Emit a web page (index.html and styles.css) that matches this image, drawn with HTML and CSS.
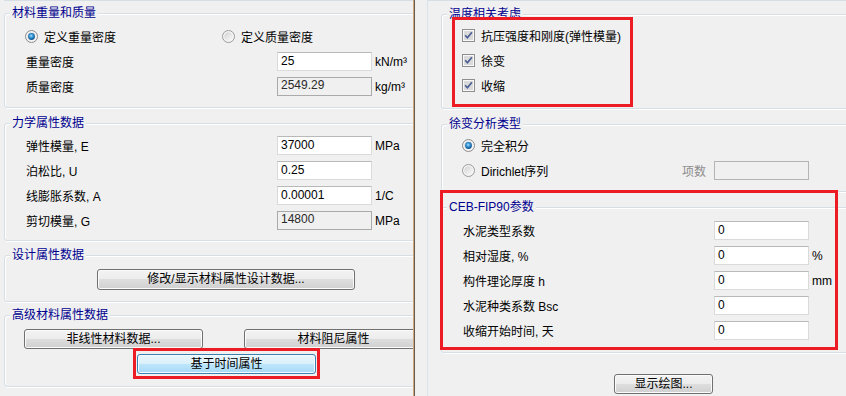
FILE: index.html
```html
<!DOCTYPE html>
<html lang="zh-CN">
<head>
<meta charset="utf-8">
<title>材料属性</title>
<link rel="stylesheet" href="styles.css">
</head>
<body>
<svg class="defs" width="0" height="0" aria-hidden="true">
  <defs>
    <linearGradient id="rbg" x1="0" y1="0" x2="1" y2="1">
      <stop offset="0" stop-color="#d2d2d2"/>
      <stop offset="1" stop-color="#fbfbfb"/>
    </linearGradient>
    <radialGradient id="rdot" cx="0.45" cy="0.4" r="0.6">
      <stop offset="0" stop-color="#a9dcf8"/>
      <stop offset="0.5" stop-color="#2f8fd0"/>
      <stop offset="1" stop-color="#0d4d8a"/>
    </radialGradient>
  </defs>
</svg>
<div class="app">
  <div class="left">
    <div class="stub"></div>

    <div class="group g1">
      <div class="gtitle">材料重量和质量</div>
      <div class="row">
        <span class="opt w197"><svg class="ico" width="13" height="13" viewBox="0 0 13 13"><circle cx="6.5" cy="6.5" r="6" fill="#f4f4f4" stroke="#8a8a8a"/><circle cx="6.5" cy="6.5" r="4.3" fill="url(#rbg)"/><circle cx="6.5" cy="6.5" r="3.4" fill="url(#rdot)"/></svg>定义重量密度</span>
        <span class="opt"><svg class="ico" width="13" height="13" viewBox="0 0 13 13"><circle cx="6.5" cy="6.5" r="6" fill="#f4f4f4" stroke="#9a9a9a"/><circle cx="6.5" cy="6.5" r="4.3" fill="url(#rbg)"/></svg>定义质量密度</span>
      </div>
      <div class="row field"><span>重量密度</span><span class="input">25</span><span class="unit">kN/m³</span></div>
      <div class="row field"><span>质量密度</span><span class="input dis">2549.29</span><span class="unit">kg/m³</span></div>
    </div>

    <div class="group g2">
      <div class="gtitle">力学属性数据</div>
      <div class="row field"><span>弹性模量, E</span><span class="input">37000</span><span class="unit">MPa</span></div>
      <div class="row field"><span>泊松比, U</span><span class="input">0.25</span><span class="unit"></span></div>
      <div class="row field"><span>线膨胀系数, A</span><span class="input">0.00001</span><span class="unit">1/C</span></div>
      <div class="row field"><span>剪切模量, G</span><span class="input dis">14800</span><span class="unit">MPa</span></div>
    </div>

    <div class="group g3">
      <div class="gtitle">设计属性数据</div>
      <button class="btn btn-design">修改/显示材料属性设计数据...</button>
    </div>

    <div class="group g4">
      <div class="gtitle">高级材料属性数据</div>
      <div class="btnrow">
        <button class="btn btn-nl">非线性材料数据...</button>
        <button class="btn btn-damp">材料阻尼属性</button>
      </div>
      <div class="btnrow second">
        <button class="btn btn-time active">基于时间属性</button>
      </div>
    </div>
  </div>

  <div class="seam"></div>

  <div class="right">
    <div class="frame">
      <div class="stub"></div>

      <div class="group r1">
        <div class="gtitle">温度相关考虑</div>
        <div class="row chk"><svg class="ico" width="13" height="13" viewBox="0 0 13 13"><rect x="0.5" y="0.5" width="12" height="12" fill="#f7f7f7" stroke="#8e8f8f"/><rect x="2" y="2" width="9" height="9" fill="#dadada"/><path d="M3.2 6.3 L5.4 8.8 L9.9 3.2" fill="none" stroke="#4b5e93" stroke-width="1.7"/></svg>抗压强度和刚度(弹性模量)</div>
        <div class="row chk"><svg class="ico" width="13" height="13" viewBox="0 0 13 13"><rect x="0.5" y="0.5" width="12" height="12" fill="#f7f7f7" stroke="#8e8f8f"/><rect x="2" y="2" width="9" height="9" fill="#dadada"/><path d="M3.2 6.3 L5.4 8.8 L9.9 3.2" fill="none" stroke="#4b5e93" stroke-width="1.7"/></svg>徐变</div>
        <div class="row chk"><svg class="ico" width="13" height="13" viewBox="0 0 13 13"><rect x="0.5" y="0.5" width="12" height="12" fill="#f7f7f7" stroke="#8e8f8f"/><rect x="2" y="2" width="9" height="9" fill="#dadada"/><path d="M3.2 6.3 L5.4 8.8 L9.9 3.2" fill="none" stroke="#4b5e93" stroke-width="1.7"/></svg>收缩</div>
      </div>

      <div class="group r2">
        <div class="gtitle">徐变分析类型</div>
        <div class="row chk"><svg class="ico" width="13" height="13" viewBox="0 0 13 13"><circle cx="6.5" cy="6.5" r="6" fill="#f4f4f4" stroke="#8a8a8a"/><circle cx="6.5" cy="6.5" r="4.3" fill="url(#rbg)"/><circle cx="6.5" cy="6.5" r="3.4" fill="url(#rdot)"/></svg>完全积分</div>
        <div class="row chk">
          <span class="opt w220"><svg class="ico" width="13" height="13" viewBox="0 0 13 13"><circle cx="6.5" cy="6.5" r="6" fill="#f4f4f4" stroke="#9a9a9a"/><circle cx="6.5" cy="6.5" r="4.3" fill="url(#rbg)"/></svg>Dirichlet序列</span>
          <span class="muted">项数</span>
          <span class="input dis blank"></span>
        </div>
      </div>

      <div class="group r3">
        <div class="gtitle">CEB-FIP90参数</div>
        <div class="row field"><span>水泥类型系数</span><span class="input">0</span><span class="unit"></span></div>
        <div class="row field"><span>相对湿度, %</span><span class="input">0</span><span class="unit">%</span></div>
        <div class="row field"><span>构件理论厚度 h</span><span class="input">0</span><span class="unit">mm</span></div>
        <div class="row field"><span>水泥种类系数 Bsc</span><span class="input">0</span><span class="unit"></span></div>
        <div class="row field"><span>收缩开始时间, 天</span><span class="input">0</span><span class="unit"></span></div>
      </div>

      <button class="btn btn-plot">显示绘图...</button>
    </div>
  </div>

  <div class="mark m-time"></div>
  <div class="mark m-temp"></div>
  <div class="mark m-ceb"></div>
</div>
</body>
</html>
```
FILE: styles.css
```css
* { box-sizing: border-box; }
html, body { margin: 0; padding: 0; }
body {
  background: #f0f0f0;
  font-family: "Liberation Sans", "Noto Sans CJK SC", sans-serif;
  font-size: 12px;
  color: #000;
  width: 846px;
  height: 396px;
  overflow: hidden;
}
.defs { position: absolute; }
.app { position: relative; display: flex; height: 396px; }

.left { width: 413px; flex: none; overflow: hidden; padding-left: 4px; }
.seam { width: 2px; flex: none; border-left: 1px solid #cfa882; border-right: 1px solid #6a5a4c; }
.right { flex: 1; overflow: hidden; padding-left: 12px; }
.frame { height: 100%; border-left: 1px solid #dbe3ea; padding-left: 13px; }

.stub { height: 1px; background: #d5dfe5; width: 460px; }
.frame .stub { margin-left: -13px; }

.group {
  position: relative;
  border: 1px solid #d5dfe5;
  border-radius: 3px;
  box-shadow: inset 1px 1px 0 #fff, 1px 1px 0 #fff;
}
.left .group { width: 420px; }
.right .group { width: 440px; }
.gtitle {
  position: absolute;
  top: -8px;
  left: 5px;
  padding: 0 2px;
  background: #f0f0f0;
  color: #00008f;
  line-height: 14px;
  white-space: nowrap;
}

.g1 { margin-top: 12px; padding: 10px 0 8px; }
.g2 { margin-top: 15px; padding: 9px 0 7px; }
.g3 { margin-top: 14px; padding: 13px 0 11px; }
.g4 { margin-top: 13px; padding: 13px 0 12px; }

.r1 { margin-top: 13px; padding: 8px 0 10px; }
.r2 { margin-top: 15px; padding: 8px 0 8px; }
.r3 { margin-top: 15px; padding: 10px 0 9px; }

.row { display: flex; align-items: center; height: 25px; padding-left: 21px; white-space: nowrap; }
.chk { padding-left: 20px; }
.field { display: grid; grid-template-columns: 251px 95px auto; }

.opt { display: flex; align-items: center; }
.w197 { width: 197px; margin-left: -1px; }
.w220 { width: 220px; }
.ico { flex: none; margin-right: 6px; }

.input {
  display: block;
  height: 19px;
  border: 1px solid #dadada;
  border-top-color: #b9b9b9;
  background: #fff;
  padding: 0 3px;
  line-height: 17px;
  color: #000;
}
.input.dis { background: #f0f0f0; border-color: #aaaaaa; color: #2a2a2a; line-height: 14px; }
.input.blank { width: 95px; height: 19px; border-color: #b4b4b4; }
.unit { padding-left: 3px; }
.muted { width: 32px; color: #8d8d8d; }

.btn {
  display: block;
  height: 20px;
  padding: 0;
  border: 1px solid #707070;
  border-radius: 3px;
  background: linear-gradient(#f3f3f3 0%, #ececec 50%, #dedede 50%, #d0d0d0 100%);
  box-shadow: inset 0 0 0 1px #fbfbfb;
  font: inherit;
  color: #000;
  line-height: 17px;
  text-align: center;
  white-space: nowrap;
}
.btn.active {
  border-color: #3c7fb1;
  background: linear-gradient(#eaf6fd 0%, #d9f0fc 50%, #bee6fd 50%, #a7d9f5 100%);
  box-shadow: inset 0 0 0 1px #f4fbff;
}
.btn-design { height: 21px; width: 258px; margin-left: 92px; }
.btnrow { display: flex; }
.btnrow.second { margin-top: 5px; }
.btn-nl { width: 179px; margin-left: 19px; }
.btn-damp { width: 179px; margin-left: 41px; flex: none; }
.btn-time { width: 179px; margin-left: 132px; }
.btn-plot { width: 99px; margin-top: 21px; margin-left: 173px; }

.mark { position: absolute; border: 3px solid #ed1c24; pointer-events: none; }
.m-time { left: 133px; top: 348px; width: 187px; height: 31px; }
.m-temp { left: 452px; top: 17px; width: 181px; height: 90px; }
.m-ceb { left: 440px; top: 190px; width: 398px; height: 160px; }
```
